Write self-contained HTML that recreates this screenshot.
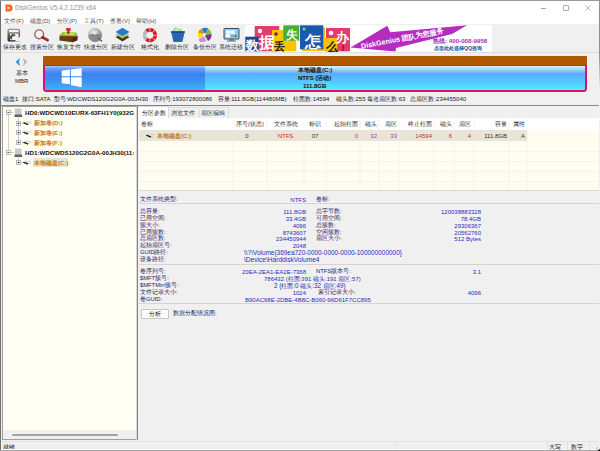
<!DOCTYPE html>
<html><head><meta charset="utf-8">
<style>
*{margin:0;padding:0;box-sizing:border-box}
html,body{width:600px;height:451px;overflow:hidden;background:#f0f0f0;font-family:"Liberation Sans",sans-serif;font-size:6.5px;color:#222}
.a{position:absolute;white-space:nowrap;line-height:1}
.tb{font-size:5.8px;color:#2a2a2a;top:45.3px;font-weight:500}
.mn{font-size:6px;color:#505050;top:17.5px}
.tr{font-size:6.2px;font-weight:bold;overflow:hidden;width:111px}
.hd{font-size:5.8px;color:#333;top:122px}
.rv{font-size:6px;top:133px}
.lb{font-size:5.8px;color:#22226a}
.vl{font-size:6px;color:#2c2cbc}
.r{text-align:right}
.inf{top:96px;font-size:6px;color:#222}
.c{text-align:center}
</style></head><body>
<!-- window frame -->
<div class="a" style="left:0;top:0;width:600px;height:451px;background:#f0f0f0"></div>
<div class="a" style="left:1px;top:1px;width:598px;height:23px;background:#fff"></div>

<!-- title bar -->
<svg class="a" style="left:5px;top:4px" width="8" height="8" viewBox="0 0 8 8"><path d="M0.5 0.5h3.5a3.5 3.5 0 0 1 0 7h-3.5z" fill="#e8661e"/><rect x="2" y="2.6" width="3" height="2.8" fill="#fbd0a0" opacity=".8"/></svg>
<div class="a" style="left:15px;top:5px;font-size:6.4px;color:#959595">DiskGenius V5.4.2.1239 x64</div>
<div class="a" style="left:541px;top:8px;width:5px;height:1px;background:#a8a8a8"></div>
<div class="a" style="left:563px;top:5px;width:6px;height:6px;border:1px solid #a8a8a8;border-radius:1px"></div>
<svg class="a" style="left:585px;top:5px" width="6" height="6" viewBox="0 0 6 6"><path d="M0.3 0.3L5.7 5.7M5.7 0.3L0.3 5.7" stroke="#a0a0a0" stroke-width="0.7"/></svg>

<!-- menu -->
<div class="a mn" style="left:4px">文件(F)</div>
<div class="a mn" style="left:30px">磁盘(D)</div>
<div class="a mn" style="left:57px">分区(P)</div>
<div class="a mn" style="left:84px">工具(T)</div>
<div class="a mn" style="left:110px">查看(V)</div>
<div class="a mn" style="left:136px">帮助(H)</div>

<!-- toolbar icons -->
<svg class="a" style="left:0;top:24px" width="245" height="22" viewBox="0 24 245 22">
  <defs>
    <linearGradient id="gsv" x1="0" y1="0" x2="0" y2="1"><stop offset="0" stop-color="#9a9a9a"/><stop offset="1" stop-color="#222"/></linearGradient>
    <radialGradient id="gq" cx=".4" cy=".35" r=".7"><stop offset="0" stop-color="#f4f4f4"/><stop offset=".5" stop-color="#b8b8b8"/><stop offset="1" stop-color="#6a6a6a"/></radialGradient>
  </defs>
  <!-- save -->
  <rect x="7.5" y="28.7" width="12.5" height="12.8" rx="1.6" fill="url(#gsv)"/>
  <rect x="9" y="30" width="9.6" height="2.2" fill="#f6f6f6"/>
  <rect x="9" y="32.2" width="9.6" height="1.8" fill="#9a9a9a"/>
  <rect x="10" y="34" width="8.6" height="6.2" fill="#f4f4f4"/>
  <path d="M11 39.5 A3 3 0 0 1 15.5 35 L14.8 36.6 A1.6 1.6 0 0 0 12.6 39.2z" fill="#505050"/>
  <path d="M14.5 41.6 L20.1 36.2 L20.1 41.6z" fill="#eeeeee"/>
  <!-- search -->
  <circle cx="39.2" cy="34.3" r="4.4" fill="#f2f0f0" stroke="#9a6450" stroke-width="1.4"/>
  <path d="M42.6 37.4 L47.6 40.2" stroke="#5a2020" stroke-width="2.6" stroke-linecap="round"/>
  <path d="M43.6 38 L47.4 40.1" stroke="#d02828" stroke-width="1.7" stroke-linecap="round"/>
  <!-- recover -->
  <path d="M59.6 35.6 L62.6 32 L76.4 32.4 L77.6 36.2z" fill="#8cc838"/>
  <path d="M63 34.6 L65 32.8 L73.5 33 L74.5 35z" fill="#c8e850"/>
  <path d="M59.6 35.6 L77.6 36.2 L77.2 40.2 L72.5 42.2 L59.4 40.6z" fill="#6a3a16"/>
  <path d="M72.5 37 L77.6 36.2 L77.2 40.2 L72.5 42.2z" fill="#4a2608"/>
  <path d="M59.6 36.6 L77.6 37.2" stroke="#8a5a2a" stroke-width=".6"/>
  <rect x="67.2" y="29.6" width="2.4" height="4.2" fill="#d01818"/>
  <path d="M65.6 30.4 L66.4 28 L70.4 28 L71.2 30.4z" fill="#e02828"/>
  <!-- quick partition -->
  <circle cx="95" cy="35" r="7" fill="url(#gq)"/>
  <path d="M88.5 36 Q92 32 95 35 Q98 33 101.5 34.5 L101.5 37 Q98 41 95 42 Q90 41 88.5 36z" fill="#8a8a8a"/>
  <path d="M97.5 37.5 L102 41.5" stroke="#666" stroke-width="1.6"/>
  <!-- new partition -->
  <path d="M115.5 37 L122.5 33.5 L129.5 37 L122.5 41.5z" fill="#5a3010"/>
  <path d="M115.5 34.5 L122.5 31 L129.5 34.5 L122.5 38.5z" fill="#8ed080"/>
  <path d="M115.5 32 L122.5 27.8 L129.5 32 L122.5 36z" fill="#2e78c8"/>
  <!-- format -->
  <path d="M150.18 29.81 A5.4 5.4 0 0 1 153.51 31.19" stroke="#d81c24" stroke-width="3.7" fill="none"/><path d="M153.91 31.59 A5.4 5.4 0 0 1 155.29 34.92" stroke="#d81c24" stroke-width="3.7" fill="none"/><path d="M155.29 35.48 A5.4 5.4 0 0 1 153.91 38.81" stroke="#d81c24" stroke-width="3.7" fill="none"/><path d="M153.51 39.21 A5.4 5.4 0 0 1 150.18 40.59" stroke="#d81c24" stroke-width="3.7" fill="none"/><path d="M149.62 40.59 A5.4 5.4 0 0 1 146.29 39.21" stroke="#d81c24" stroke-width="3.7" fill="none"/><path d="M145.89 38.81 A5.4 5.4 0 0 1 144.51 35.48" stroke="#b4b4b4" stroke-width="3.7" fill="none"/><path d="M144.51 34.92 A5.4 5.4 0 0 1 145.89 31.59" stroke="#b4b4b4" stroke-width="3.7" fill="none"/><path d="M146.29 31.19 A5.4 5.4 0 0 1 149.62 29.81" stroke="#d81c24" stroke-width="3.7" fill="none"/>
  <!-- delete -->
  <path d="M172.5 31 L175 27.6 L182 29.5 L180.5 32z" fill="#8cd080"/>
  <path d="M174 30.5 L176 28.4 L180 29.6 L179 31z" fill="#c8f0c0"/>
  <path d="M171 31.5 L184.8 31.5 L182.4 42 L173.4 42z" fill="#2a6ab8"/>
  <path d="M171 31.2 L184.8 31.2 L184.5 33 L171.3 33z" fill="#1a4a88"/>
  <path d="M175 34 L175.7 41 M177.9 34 L177.9 41 M180.8 34 L180.1 41" stroke="#1c5aa0" stroke-width=".7"/>
  <!-- backup -->
  <path d="M204.5 35 L198 32.5 A7 7 0 0 1 202 28.5z" fill="#f08a10"/>
  <path d="M204.5 35 L202 28.5 A7 7 0 0 1 208.5 28.8z" fill="#2a7ad0"/>
  <path d="M204.5 35 L208.5 28.8 A7 7 0 0 1 211.5 34z" fill="#7ac830"/>
  <path d="M204.5 35 L211.5 34 A7 7 0 0 1 208 41z" fill="#8a2a9a"/>
  <path d="M204 36 L206.5 41.5 L200 42.2 L198.5 39.5z" fill="#c890d8"/>
  <path d="M204.5 35 L199.5 38.5 A7 7 0 0 1 198 32.5z" fill="#f0e010"/>
  <circle cx="204.3" cy="34.6" r="1.6" fill="#f4f4f4"/>
  <!-- migrate -->
  <rect x="223.5" y="28" width="16" height="11.5" rx="1.5" fill="#3a4a5a"/>
  <rect x="224.5" y="29" width="14" height="9.5" fill="#8ed0f4"/>
  <rect x="226" y="30.5" width="4" height="3.2" fill="#fff"/><rect x="230.6" y="30.5" width="4" height="3.2" fill="#fff"/>
  <rect x="226" y="34.3" width="4" height="3" fill="#fff"/>
  <path d="M231 35.7 h4 v-1.3 l2.5 1.7 l-2.5 1.7 v-1.3 h-4z" fill="#e04020"/>
  <rect x="229" y="39.5" width="5" height="1" fill="#3a4a5a"/><rect x="227" y="40.5" width="9" height="1" fill="#5a6a7a"/>
</svg>

<!-- toolbar labels -->
<div class="a tb" style="left:3px">保存更改</div>
<div class="a tb" style="left:30px;color:#1a2a7a">搜索分区</div>
<div class="a tb" style="left:57px">恢复文件</div>
<div class="a tb" style="left:84px">快速分区</div>
<div class="a tb" style="left:111px">新建分区</div>
<div class="a tb" style="left:141px">格式化</div>
<div class="a tb" style="left:165px">删除分区</div>
<div class="a tb" style="left:193px">备份分区</div>
<div class="a tb" style="left:219px">系统迁移</div>

<div class="a" style="left:1px;top:52px;width:598px;height:1px;background:#dedede"></div>
<!-- banner -->
<div class="a" style="left:245px;top:25px;width:247px;height:27px;background:#fff"></div>
<svg class="a" style="left:245px;top:25px" width="247" height="27" viewBox="245 25 247 27">
  <rect x="254.7" y="26" width="24.6" height="25.3" fill="#e43a6c"/>
  <circle cx="260" cy="31" r="2.2" fill="#fff"/>
  <rect x="272" y="30" width="12" height="21.3" fill="#f6c400"/>
  <circle cx="276" cy="34" r="1.8" fill="#8a1a2a"/>
  <rect x="283.3" y="40" width="13" height="11.3" fill="#f6c400"/>
  <rect x="283.3" y="25.3" width="16" height="15.4" fill="#4aae2e"/>
  <rect x="302" y="27.5" width="23" height="23.5" fill="#f6c400"/>
  <rect x="300" y="25.3" width="23.3" height="24" fill="#1a5aae"/>
  <circle cx="304" cy="29" r="1.5" fill="#9ad060"/>
  <rect x="245.3" y="36.7" width="13.4" height="14.6" fill="#1a4a8e"/>
  <rect x="326" y="28" width="24" height="23.3" fill="#e43a6c"/>
  <circle cx="331" cy="33" r="2.3" fill="#fff"/>
  <rect x="324.7" y="38" width="12.6" height="13.3" fill="#f6c400"/>
  <path d="M350.5 47.4 L387.3 25.8 L390.2 32.3 L467 25.2 L452 34 L396 48 L395.5 51.5z" fill="#b42cc0"/>
  <text x="258.5" y="47.5" font-size="15.5" fill="#fff" font-weight="bold" font-family="Liberation Sans">据</text>
  <text x="245.6" y="50" font-size="13" fill="#fff" font-weight="bold" font-family="Liberation Sans">数</text>
  <text x="274.3" y="50.3" font-size="11" fill="#1a1a1a" font-weight="bold" font-family="Liberation Sans">丢</text>
  <text x="286" y="38.5" font-size="11.5" fill="#fff" font-weight="bold" font-family="Liberation Sans">失</text>
  <text x="304.5" y="46.5" font-size="15.5" fill="#fff" font-weight="bold" font-family="Liberation Sans">怎</text>
  <text x="325.5" y="50.5" font-size="11.5" fill="#1a1a1a" font-weight="bold" font-family="Liberation Sans">么</text>
  <text x="336" y="41.5" font-size="12.5" fill="#fff" font-weight="bold" font-family="Liberation Sans">办</text>
  <text x="341.5" y="50.5" font-size="9" fill="#7a1020" font-weight="bold" font-family="Liberation Sans">!</text>
  <text x="0" y="0" font-size="7.2" fill="#fff" font-weight="bold" font-family="Liberation Sans" transform="translate(361.6 48.8) rotate(-11)">DiskGenius 团队为您服务</text>
  <text x="433" y="43.2" font-size="6.2" fill="#a030b8" font-weight="bold" font-family="Liberation Sans">热线: 400-008-9958</text>
  <text x="434" y="49.8" font-size="5.3" fill="#2050a0" font-weight="bold" font-family="Liberation Sans">点击此处选择QQ咨询</text>
</svg>

<!-- disk map -->
<svg class="a" style="left:14px;top:57px" width="16" height="10" viewBox="0 0 16 10"><path d="M6 0.8 L1.5 5 L6 9.2 L5 5z" fill="#2a9ae0"/><path d="M9 0.8 L13.5 5 L9 9.2 L10 5z" fill="#b8b8b8"/></svg>
<div class="a" style="left:16px;top:70px;font-size:6px;color:#222;font-weight:500">基本</div>
<div class="a" style="left:15px;top:78px;font-size:6px;color:#222">MBR</div>
<div class="a" style="left:43px;top:56px;width:544px;height:9px;background:#b05800;border-radius:1px 1px 0 0"></div>
<div class="a" style="left:43px;top:65px;width:544px;height:26.5px;border:2px solid #e0106a;border-top-width:1.5px;border-radius:0 0 3.5px 3.5px;background:linear-gradient(#e0f0ff 0,#b8dcff 10%,#5aacff 32%,#52ccff 70%,#4cf0ff 100%);overflow:hidden">
  <div class="a" style="left:0;top:0;width:160px;height:25px;background:linear-gradient(#a8c8ff 0,#6aa0fa 10%,#3c80f0 32%,#3a9af4 70%,#3cb8f8 100%)"></div>
</div>
<svg class="a" style="left:60px;top:67px" width="23" height="22" viewBox="60 67 23 22">
  <path d="M61.7 70.8 L69.9 69.6 L69.9 76.2 L61.7 76.2z M70.9 69.4 L81.7 68.1 L81.7 76.2 L70.9 76.2z M61.7 77.2 L69.9 77.2 L69.9 84.2 L61.7 83.2z M70.9 77.2 L81.7 77.2 L81.7 87.2 L70.9 85.3z" fill="#fff"/>
</svg>
<div class="a" style="left:298px;top:67px;font-size:6px;font-weight:bold;color:#111">本地磁盘(C:)</div>
<div class="a" style="left:298px;top:75px;font-size:6px;font-weight:bold;color:#111">NTFS (活动)</div>
<div class="a" style="left:303px;top:83px;font-size:6px;font-weight:bold;color:#111">111.8GB</div>

<div class="a inf" style="left:3px">磁盘1</div>
<div class="a inf" style="left:22px">接口:SATA</div>
<div class="a inf" style="left:53.5px">型号:WDCWDS120G2G0A-00JH30</div>
<div class="a inf" style="left:152.5px">序列号:193072800086</div>
<div class="a inf" style="left:217.5px">容量:111.8GB(114480MB)</div>
<div class="a inf" style="left:293px">柱面数:14594</div>
<div class="a inf" style="left:335.8px">磁头数:255</div>
<div class="a inf" style="left:367px">每道扇区数:63</div>
<div class="a inf" style="left:410.4px">总扇区数:234455040</div>
<div class="a" style="left:1px;top:105px;width:598px;height:1px;background:#858585"></div>

<!-- left tree -->
<div class="a" style="left:2px;top:106px;width:135px;height:334px;background:#fffff4;border:1px solid #a0a0a0;border-right-color:#d8d8d8"></div>
<div class="a" style="left:3px;top:430px;width:133px;height:9px;background:#f0f0f0"></div>
<svg class="a" style="left:3px;top:108px" width="134" height="60" viewBox="3 108 134 60">
  <path d="M8.5 115 V150 M10.5 112.5 H14 M10.5 152.5 H14 M18.5 117 V140 M20.5 123.5 H23 M20.5 132.5 H23 M20.5 142.5 H23 M18.5 155 V160 M20.5 162.5 H23" stroke="#c4c4c4" stroke-width=".8"/>
  <g fill="#fff" stroke="#a8acb4" stroke-width=".8"><rect x="6.5" y="110.5" width="4" height="4"/><rect x="6.5" y="150.5" width="4" height="4"/><rect x="16.5" y="121.5" width="4" height="4"/><rect x="16.5" y="130.5" width="4" height="4"/><rect x="16.5" y="140.5" width="4" height="4"/><rect x="16.5" y="160.5" width="4" height="4"/></g>
  <path d="M7.5 112.5h2M7.5 152.5h2M17.5 123.5h2M18.5 122.5v2M17.5 132.5h2M18.5 131.5v2M17.5 142.5h2M18.5 141.5v2M17.5 162.5h2M18.5 161.5v2" stroke="#303070" stroke-width=".8"/>
  <g>
    <rect x="15" y="108.5" width="6.5" height="6" fill="#c8c8c8"/><rect x="14.5" y="114.5" width="7.5" height="2.5" fill="#606060"/>
    <rect x="15" y="148.5" width="6.5" height="6" fill="#c8c8c8"/><rect x="14.5" y="154.5" width="7.5" height="2.5" fill="#606060"/>
  </g>
  <g><path d="M25.5 121.2 L31 121.8 L31 123.6 L27.5 124.8 L24.5 123.3z" fill="#e4e4e4" stroke="#b8b8b8" stroke-width=".3"/><path d="M23.8 122.8 L27.6 124.3" stroke="#1a1a1a" stroke-width="1.3" stroke-linecap="round"/><path d="M25.5 130.7 L31 131.3 L31 133.1 L27.5 134.3 L24.5 132.8z" fill="#e4e4e4" stroke="#b8b8b8" stroke-width=".3"/><path d="M23.8 132.3 L27.6 133.8" stroke="#1a1a1a" stroke-width="1.3" stroke-linecap="round"/><path d="M25.5 140.7 L31 141.3 L31 143.1 L27.5 144.3 L24.5 142.8z" fill="#e4e4e4" stroke="#b8b8b8" stroke-width=".3"/><path d="M23.8 142.3 L27.6 143.8" stroke="#1a1a1a" stroke-width="1.3" stroke-linecap="round"/><path d="M25.5 160.7 L31 161.3 L31 163.1 L27.5 164.3 L24.5 162.8z" fill="#e4e4e4" stroke="#b8b8b8" stroke-width=".3"/><path d="M23.8 162.3 L27.6 163.8" stroke="#1a1a1a" stroke-width="1.3" stroke-linecap="round"/></g>
  <rect x="33" y="158" width="35" height="9" fill="#e8e4d8"/>
</svg>
<div class="a tr" style="left:25px;top:110px;color:#111">HD0:WDCWD10EURX-63FH1Y0(932G</div>
<div class="a tr" style="left:34px;top:120px;color:#c47a28">新加卷(D:)</div>
<div class="a tr" style="left:34px;top:130px;color:#c47a28">新加卷(E:)</div>
<div class="a tr" style="left:34px;top:140px;color:#c47a28">新加卷(F:)</div>
<div class="a tr" style="left:25px;top:150px;color:#111">HD1:WDCWDS120G2G0A-00JH30(11:</div>
<div class="a tr" style="left:34px;top:160px;color:#c47a28">本地磁盘(C:)</div>
<div class="a" style="left:12px;top:433.5px;width:106px;height:2px;background:#a4a4a4;border-radius:1px"></div>

<!-- right panel -->
<div class="a" style="left:137px;top:105px;width:1px;height:335px;background:#858585"></div>
<!-- tabs -->
<div class="a" style="left:168px;top:107px;width:61px;height:11px;background:#f0f0f0;border:1px solid #e0e0e0;border-bottom:none"></div>
<div class="a" style="left:199px;top:108px;width:1px;height:10px;background:#e0e0e0"></div>
<div class="a" style="left:138px;top:106px;width:31px;height:13px;background:#fff;border:1px solid #dadada;border-bottom:none;border-left:none"></div>
<div class="a" style="left:142px;top:110px;font-size:6px;color:#222">分区参数</div>
<div class="a" style="left:171px;top:110px;font-size:6px;color:#333">浏览文件</div>
<div class="a" style="left:201px;top:110px;font-size:6px;color:#333">扇区编辑</div>
<!-- table -->
<div class="a" style="left:139px;top:118px;width:460px;height:72px;background:#fffdf2"></div>
<div class="a" style="left:139px;top:118px;width:460px;height:12px;background:#fff"></div>
<div class="a" style="left:139px;top:130px;width:388px;height:11px;background:#e9e5d6"></div>
<svg class="a" style="left:139px;top:118px" width="460" height="72" viewBox="139 118 460 72">
  <g stroke="#efebe2" stroke-width=".6">
    <path d="M139 151.5H599M139 161.5H599M139 171.5H599M139 181.5H599"/>
    <path d="M233 118V190M267 118V190M304 118V190M326 118V190M360 118V190M379 118V190M399 118V190M434 118V190M454 118V190M474 118V190M509 118V190M527 118V190"/>
  </g>
  <path d="M148.5 134 L154 134.6 L154 136.2 L150.5 137.2 L147.5 135.8z" fill="#e4e4e4" stroke="#b8b8b8" stroke-width=".3"/><path d="M146.8 135.3 L150.6 136.8" stroke="#1a1a1a" stroke-width="1.3" stroke-linecap="round"/>
</svg>
<div class="a hd" style="left:141px">卷标</div>
<div class="a hd c" style="left:233px;width:34px">序号(状态)</div>
<div class="a hd c" style="left:267px;width:37px">文件系统</div>
<div class="a hd c" style="left:304px;width:22px">标识</div>
<div class="a hd r" style="left:326px;width:32px">起始柱面</div>
<div class="a hd r" style="left:360px;width:17px">磁头</div>
<div class="a hd r" style="left:379px;width:18px">扇区</div>
<div class="a hd r" style="left:399px;width:33px">终止柱面</div>
<div class="a hd r" style="left:434px;width:18px">磁头</div>
<div class="a hd r" style="left:454px;width:17px">扇区</div>
<div class="a hd r" style="left:474px;width:33px">容量</div>
<div class="a hd r" style="left:509px;width:16px">属性</div>
<div class="a rv" style="left:157px;color:#c47a28;font-weight:bold">本地磁盘(C:)</div>
<div class="a rv c" style="left:230px;width:34px;color:#333">0</div>
<div class="a rv c" style="left:267px;width:37px;color:#e02020">NTFS</div>
<div class="a rv c" style="left:304px;width:22px;color:#333">07</div>
<div class="a rv r" style="left:326px;width:32px;color:#b030b0">0</div>
<div class="a rv r" style="left:360px;width:17px;color:#b030b0">32</div>
<div class="a rv r" style="left:379px;width:18px;color:#b030b0">33</div>
<div class="a rv r" style="left:399px;width:33px;color:#c03030">14594</div>
<div class="a rv r" style="left:434px;width:18px;color:#c03030">6</div>
<div class="a rv r" style="left:454px;width:17px;color:#c03030">4</div>
<div class="a rv r" style="left:474px;width:33px;color:#333">111.8GB</div>
<div class="a rv r" style="left:509px;width:16px;color:#333">A</div>

<!-- info -->
<div class="a" style="left:139px;top:190px;width:460px;height:1px;background:#d8d8d8"></div>
<div class="a" style="left:139px;top:203px;width:460px;height:1px;background:#d4d4d4"></div>
<div class="a" style="left:139px;top:264px;width:460px;height:1px;background:#d4d4d4"></div>
<div class="a" style="left:139px;top:303px;width:460px;height:1px;background:#d4d4d4"></div>

<div class="a lb" style="left:140px;top:197px">文件系统类型:</div>
<div class="a vl r" style="left:250px;top:197px;width:56px">NTFS</div>
<div class="a lb" style="left:316px;top:197px">卷标:</div>

<div class="a lb" style="left:140px;top:209.2px">总容量:</div>
<div class="a lb" style="left:140px;top:216.0px">已用空间:</div>
<div class="a lb" style="left:140px;top:222.7px">簇大小:</div>
<div class="a lb" style="left:140px;top:229.5px">已用簇数:</div>
<div class="a lb" style="left:140px;top:236.3px">总扇区数:</div>
<div class="a lb" style="left:140px;top:243.0px">起始扇区号:</div>
<div class="a lb" style="left:140px;top:249.8px">GUID路径:</div>
<div class="a lb" style="left:140px;top:256.6px">设备路径:</div>
<div class="a vl r" style="left:230px;top:209.2px;width:76px">111.8GB</div>
<div class="a vl r" style="left:230px;top:216.0px;width:76px">33.4GB</div>
<div class="a vl r" style="left:230px;top:222.7px;width:76px">4096</div>
<div class="a vl r" style="left:230px;top:229.5px;width:76px">8743607</div>
<div class="a vl r" style="left:230px;top:236.3px;width:76px">234450944</div>
<div class="a vl r" style="left:230px;top:243.0px;width:76px">2048</div>
<div class="a vl" style="left:244px;top:249.8px;font-size:6.45px">\\?\Volume{369ea720-0000-0000-0000-100000000000}</div>
<div class="a vl" style="left:244px;top:256.6px;font-size:6.6px">\Device\HarddiskVolume4</div>
<div class="a lb" style="left:316px;top:209.2px">总字节数:</div>
<div class="a lb" style="left:316px;top:216.0px">可用空间:</div>
<div class="a lb" style="left:316px;top:222.7px">总簇数:</div>
<div class="a lb" style="left:316px;top:229.5px">空闲簇数:</div>
<div class="a lb" style="left:316px;top:236.3px">扇区大小:</div>
<div class="a vl r" style="left:400px;top:209.2px;width:81px">120038883328</div>
<div class="a vl r" style="left:400px;top:216.0px;width:81px">78.4GB</div>
<div class="a vl r" style="left:400px;top:222.7px;width:81px">29306367</div>
<div class="a vl r" style="left:400px;top:229.5px;width:81px">20562760</div>
<div class="a vl r" style="left:400px;top:236.3px;width:81px">512 Bytes</div>

<div class="a lb" style="left:140px;top:269.0px">卷序列号:</div>
<div class="a lb" style="left:140px;top:276.0px">$MFT簇号:</div>
<div class="a lb" style="left:140px;top:283.0px">$MFTMirr簇号:</div>
<div class="a lb" style="left:140px;top:290.0px">文件记录大小:</div>
<div class="a lb" style="left:140px;top:297.0px">卷GUID:</div>
<div class="a vl r" style="left:200px;top:269.0px;width:106px">20EA-2EA1-EA2E-7368</div>
<div class="a vl" style="left:264px;top:276.0px">786432 (柱面:391 磁头:191 扇区:57)</div>
<div class="a vl" style="left:274px;top:283.0px;font-size:6.3px">2 (柱面:0 磁头:32 扇区:49)</div>
<div class="a vl r" style="left:250px;top:290.0px;width:56px">1024</div>
<div class="a vl" style="left:245px;top:297.0px">B90AC68E-2DBE-4B8C-B060-96D61F7CC895</div>
<div class="a lb" style="left:316px;top:269.0px">NTFS版本号:</div>
<div class="a lb" style="left:318px;top:290.0px">索引记录大小:</div>
<div class="a vl r" style="left:440px;top:269.0px;width:41px">3.1</div>
<div class="a vl r" style="left:440px;top:290.0px;width:41px">4096</div>

<div class="a" style="left:141px;top:309px;width:28px;height:10px;background:#fcfcfc;border:1px solid #c8c8c8;border-radius:1px"></div>
<div class="a" style="left:149px;top:311px;font-size:6px;color:#222">分析</div>
<div class="a lb" style="left:173px;top:311px">数据分配情况图:</div>

<!-- window border -->
<div class="a" style="left:0;top:0;width:1px;height:451px;background:#707070"></div>
<div class="a" style="left:0;top:0;width:600px;height:1px;background:#9a9a9a"></div>
<div class="a" style="left:599px;top:0;width:1px;height:90px;background:linear-gradient(#909090,#909090 60%,rgba(144,144,144,0))"></div>

<!-- status -->
<div class="a" style="left:1px;top:441px;width:597px;height:1px;background:#e2e2e2"></div>
<div class="a" style="left:3px;top:444px;font-size:6px;color:#222">就绪</div>
<div class="a" style="left:395px;top:442px;width:1px;height:7px;background:#e2e2e2"></div>
<div class="a" style="left:547px;top:442px;width:1px;height:8px;background:#e2e2e2"></div>
<div class="a" style="left:1px;top:449px;width:598px;height:1px;background:#fafafa"></div>
<div class="a" style="left:567px;top:442px;width:1px;height:8px;background:#e2e2e2"></div>
<div class="a" style="left:589px;top:442px;width:1px;height:8px;background:#e2e2e2"></div>
<div class="a" style="left:0;top:450px;width:600px;height:1px;background:#a8a8a8"></div>
<svg class="a" style="left:590px;top:443px" width="10" height="8" viewBox="590 443 10 8"><path d="M597 447.5h1M595.5 449h1M597 449h1" stroke="#b0b0b0" stroke-width="1"/><path d="M597.5 451 L600 448.5 L600 451z" fill="#222"/></svg>
<div class="a" style="left:549px;top:444px;font-size:6px;color:#222">大写</div>
<div class="a" style="left:571px;top:444px;font-size:6px;color:#222">数字</div>
</body></html>
